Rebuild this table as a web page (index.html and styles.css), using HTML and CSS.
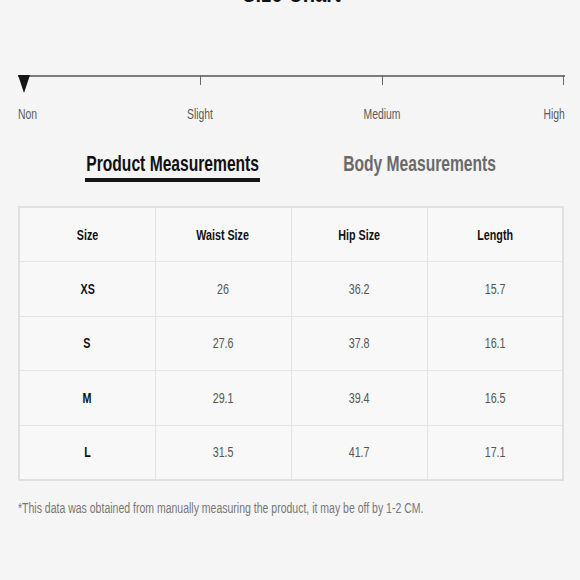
FILE: index.html
```html
<!DOCTYPE html>
<html>
<head>
<meta charset="utf-8">
<link rel="stylesheet" href="styles.css">
</head>
<body>
<div class="page">
  <h1 class="title"><span class="n">Size Chart</span></h1>
  <div class="scale">
    <div class="scale-line">
      <span class="tick t1"></span>
      <span class="tick t2"></span>
      <span class="tick t3"></span>
      <span class="marker"></span>
    </div>
    <div class="scale-labels">
      <span class="lbl l0"><span class="n">Non</span></span>
      <span class="lbl l1"><span class="n">Slight</span></span>
      <span class="lbl l2"><span class="n">Medium</span></span>
      <span class="lbl l3"><span class="n">High</span></span>
    </div>
  </div>
  <div class="tabs">
    <div class="tab active"><span class="n">Product Measurements</span></div>
    <div class="tab"><span class="n">Body Measurements</span></div>
  </div>
  <table class="chart">
    <tr><th><span class="n">Size</span></th><th><span class="n">Waist Size</span></th><th><span class="n">Hip Size</span></th><th><span class="n">Length</span></th></tr>
    <tr><th><span class="n">XS</span></th><td><span class="n">26</span></td><td><span class="n">36.2</span></td><td><span class="n">15.7</span></td></tr>
    <tr><th><span class="n">S</span></th><td><span class="n">27.6</span></td><td><span class="n">37.8</span></td><td><span class="n">16.1</span></td></tr>
    <tr><th><span class="n">M</span></th><td><span class="n">29.1</span></td><td><span class="n">39.4</span></td><td><span class="n">16.5</span></td></tr>
    <tr><th><span class="n">L</span></th><td><span class="n">31.5</span></td><td><span class="n">41.7</span></td><td><span class="n">17.1</span></td></tr>
  </table>
  <p class="note"><span class="n">*This data was obtained from manually measuring the product, it may be off by 1-2 CM.</span></p>
</div>
</body>
</html>
```
FILE: styles.css
```css
html, body {
  margin: 0;
  padding: 0;
  background: #f5f5f5;
}
body {
  font-family: "Liberation Sans", Arial, sans-serif;
  color: #222;
}
.n {
  display: inline-block;
  white-space: nowrap;
  transform: scaleX(0.74);
  transform-origin: center;
}
.page {
  display: flow-root;
  width: 580px;
  height: 580px;
  overflow: hidden;
  padding: 0 15px 0 18px;
  box-sizing: border-box;
}
.title {
  margin: -21px 0 0 0;
  height: 28px;
  line-height: 28px;
  font-size: 28px;
  font-weight: bold;
  text-align: center;
  color: #111;
}
.title .n {
  transform: scaleX(0.72);
}
.scale {
  margin-top: 68px;
  width: 547px;
}
.scale-line {
  position: relative;
  height: 2px;
  background: #7d7d7d;
}
.tick {
  position: absolute;
  top: 0;
  width: 1px;
  height: 10px;
  background: #6a6a6a;
}
.t1 { left: 182px; }
.t2 { left: 364px; }
.t3 { left: 545px; }
.marker {
  position: absolute;
  left: 0;
  top: 0;
  width: 0;
  height: 0;
  border-left: 6px solid transparent;
  border-right: 6px solid transparent;
  border-top: 18px solid #151515;
}
.scale-labels {
  position: relative;
  height: 16px;
  line-height: 16px;
  margin-top: 29px;
  font-size: 14px;
  color: #5a5a5a;
}
.lbl {
  position: absolute;
  top: 0;
  white-space: nowrap;
}
.l0 { left: 0; }
.l0 .n { transform-origin: left; }
.l1 { left: 182px; transform: translateX(-50%); }
.l2 { left: 364px; transform: translateX(-50%); }
.l3 { right: 0; }
.l3 .n { transform-origin: right; }
.tabs {
  display: flex;
  margin-top: 29px;
}
.tab {
  font-size: 22px;
  font-weight: bold;
  color: #6a6a6a;
  line-height: 26px;
  height: 31px;
  text-align: center;
  box-sizing: border-box;
  white-space: nowrap;
  display: flex;
  justify-content: center;
}
.tab .n {
  transform: scaleX(0.71);
}
.tab.active {
  color: #111;
  width: 175px;
  margin-left: 67px;
  border-bottom: 4px solid #151515;
}
.tab + .tab {
  width: 155px;
  margin-left: 82px;
}
.chart {
  margin-top: 24px;
  width: 546px;
  border-collapse: collapse;
  table-layout: fixed;
  background: #f8f8f8;
  border: 2px solid #e0e0e0;
}
.chart tr {
  height: 54.5px;
}
.chart th, .chart td {
  border: 1px solid #e3e3e3;
  text-align: center;
  font-size: 14.5px;
  padding: 0;
}
.chart th {
  font-weight: bold;
  color: #111;
}
.chart td {
  color: #555;
}
.note {
  margin: 19px 0 0 0;
  font-size: 14px;
  line-height: 16px;
  color: #777;
}
.note .n {
  transform: scaleX(0.75);
  transform-origin: left;
}
```
